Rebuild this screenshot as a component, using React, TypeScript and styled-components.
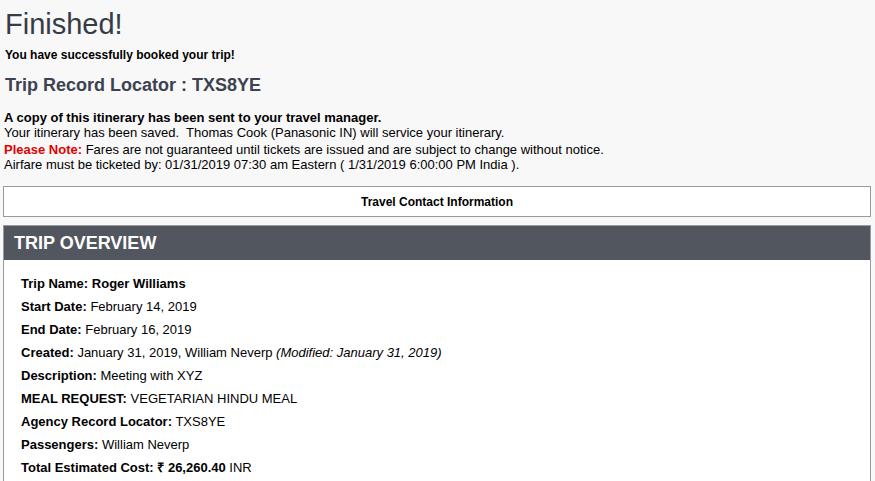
import styled, { createGlobalStyle } from 'styled-components';

const GlobalStyle = createGlobalStyle`
    html, body {
        margin: 0;
        padding: 0;
        background: #f8f8f8;
    }
    body {
        font-family: 'Liberation Sans', Arial, sans-serif;
        color: #000;
    }
`;

interface Field {
    label: string;
    value: React.ReactNode;
    boldValue?: boolean;
}

const fields: Field[] = [
    { label: 'Trip Name:', value: 'Roger Williams', boldValue: true },
    { label: 'Start Date:', value: 'February 14, 2019' },
    { label: 'End Date:', value: 'February 16, 2019' },
    {
        label: 'Created:',
        value: (
            <>
                January 31, 2019, William Neverp{' '}
                <em>(Modified: January 31, 2019)</em>
            </>
        ),
    },
    { label: 'Description:', value: 'Meeting with XYZ' },
    { label: 'MEAL REQUEST:', value: 'VEGETARIAN HINDU MEAL' },
    { label: 'Agency Record Locator:', value: 'TXS8YE' },
    { label: 'Passengers:', value: 'William Neverp' },
    {
        label: 'Total Estimated Cost:',
        value: (
            <>
                <b>₹ 26,260.40</b> INR
            </>
        ),
    },
];

const App = () => {
    return (
        <Page>
            <GlobalStyle />
            <Title>Finished!</Title>
            <Success>You have successfully booked your trip!</Success>
            <Locator>Trip Record Locator : TXS8YE</Locator>
            <Notes>
                <NoteHead>A copy of this itinerary has been sent to your travel manager.</NoteHead>
                <NoteLine>
                    Your itinerary has been saved.&nbsp; Thomas Cook (Panasonic IN) will service your itinerary.
                </NoteLine>
                <NoteLine $gap>
                    <Warn>Please Note:</Warn> Fares are not guaranteed until tickets are issued and are subject to change without notice.
                </NoteLine>
                <NoteLine>
                    Airfare must be ticketed by: 01/31/2019 07:30 am Eastern ( 1/31/2019 6:00:00 PM India ).
                </NoteLine>
            </Notes>
            <ContactButton>Travel Contact Information</ContactButton>
            <Panel>
                <PanelHeader>TRIP OVERVIEW</PanelHeader>
                <PanelBody>
                    {fields.map((f) => (
                        <Row key={f.label} $bold={f.boldValue}>
                            <Label>{f.label}</Label> {f.value}
                        </Row>
                    ))}
                </PanelBody>
            </Panel>
        </Page>
    );
};

const Page = styled.div`
    padding: 4px 4px 0 3px;
`;

const Title = styled.h1`
    margin: 0 0 0 2px;
    font-size: 29px;
    font-weight: normal;
    line-height: 40px;
    color: #363c46;
`;

const Success = styled.div`
    margin: 3px 0 0 2px;
    font-size: 12px;
    font-weight: bold;
    line-height: 16px;
`;

const Locator = styled.h2`
    margin: 10px 0 0 2px;
    font-size: 18px;
    font-weight: bold;
    line-height: 24px;
    color: #3b4250;
`;

const Notes = styled.div`
    margin: 13px 0 0 1px;
    font-size: 13px;
    line-height: 15px;
`;

const NoteHead = styled.div`
    font-weight: bold;
`;

const NoteLine = styled.div<{ $gap?: boolean }>`
    margin-top: ${(p) => (p.$gap ? '2px' : '0')};
`;

const Warn = styled.span`
    color: #e00000;
    font-weight: bold;
`;

const ContactButton = styled.div`
    margin-top: 14px;
    height: 29px;
    display: flex;
    align-items: center;
    justify-content: center;
    background: #fff;
    border: 1px solid #9a9a9e;
    font-size: 12px;
    font-weight: bold;
`;

const Panel = styled.div`
    margin-top: 8px;
    border: 1px solid #9a9a9e;
    background: #fff;
`;

const PanelHeader = styled.div`
    height: 34px;
    display: flex;
    align-items: center;
    padding-left: 10px;
    background: #52575f;
    color: #fff;
    font-size: 18px;
    font-weight: bold;
`;

const PanelBody = styled.div`
    padding: 12px 17px 20px;
`;

const Row = styled.div<{ $bold?: boolean }>`
    font-size: 13px;
    line-height: 23px;
    font-weight: ${(p) => (p.$bold ? 'bold' : 'normal')};
`;

const Label = styled.b`
    font-weight: bold;
`;

export default App;
